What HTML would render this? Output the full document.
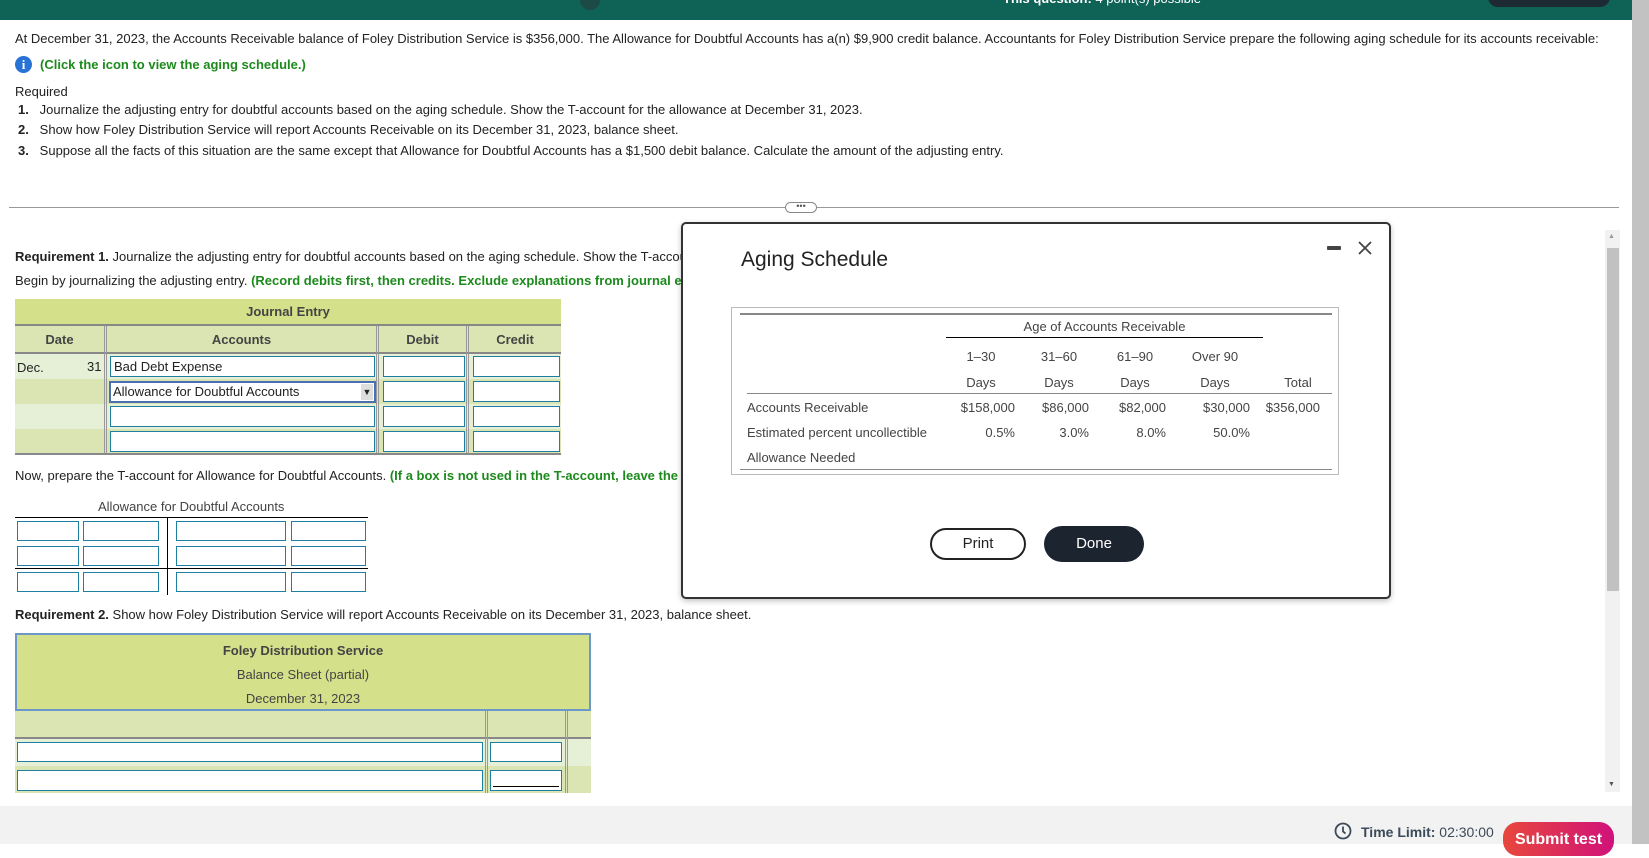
<!DOCTYPE html>
<html><head><meta charset="utf-8">
<style>
*{margin:0;padding:0;box-sizing:border-box}
body{width:1649px;height:844px;overflow:hidden;background:#fff;font-family:"Liberation Sans",Arial,sans-serif;color:#222;font-size:13px;position:relative}
.a{position:absolute;white-space:nowrap}
.g{color:#1d8a1d;font-weight:bold}
.in{position:absolute;background:#fff;border:1px solid #1e7fa0}
.hl{position:absolute;background:#888}
</style></head><body>
<!-- top bar -->
<div class="a" style="left:0;top:0;width:1632px;height:20px;background:#0f6256"></div>
<div class="a" style="left:1003px;top:-9px;color:#fff;font-size:13px"><b>This question:</b> 4 point(s) possible</div>
<div class="a" style="left:1488px;top:-14px;width:122px;height:21px;border-radius:10px;background:#1d2a33"></div>
<div class="a" style="left:580px;top:-10px;width:20px;height:20px;border-radius:50%;background:#1d4a44"></div>
<!-- right strip -->
<div class="a" style="left:1632px;top:0;width:17px;height:844px;background:#c2c2c2"></div>

<div class="a" style="left:15px;top:31px;font-size:13px">At December 31, 2023, the Accounts Receivable balance of Foley Distribution Service is $356,000. The Allowance for Doubtful Accounts has a(n) $9,900 credit balance. Accountants for Foley Distribution Service prepare the following aging schedule for its accounts receivable:</div>
<div class="a" style="left:15px;top:56px;width:17px;height:17px;border-radius:50%;background:#2a73d6;color:#fff;font:bold 13px 'Liberation Serif',serif;text-align:center;line-height:17px">i</div>
<div class="a g" style="left:40px;top:57px">(Click the icon to view the aging schedule.)</div>
<div class="a" style="left:15px;top:84px">Required</div>
<div class="a" style="left:18px;top:102px"><b>1.</b>&nbsp;&nbsp; Journalize the adjusting entry for doubtful accounts based on the aging schedule. Show the T-account for the allowance at December 31, 2023.</div>
<div class="a" style="left:18px;top:122px"><b>2.</b>&nbsp;&nbsp; Show how Foley Distribution Service will report Accounts Receivable on its December 31, 2023, balance sheet.</div>
<div class="a" style="left:18px;top:143px"><b>3.</b>&nbsp;&nbsp; Suppose all the facts of this situation are the same except that Allowance for Doubtful Accounts has a $1,500 debit balance. Calculate the amount of the adjusting entry.</div>

<div class="a" style="left:9px;top:207px;width:1610px;height:1px;background:#999"></div>
<div class="a" style="left:785px;top:202px;width:32px;height:11px;border:1px solid #888;border-radius:6px;background:#fff;font-size:9px;line-height:6px;text-align:center;color:#555">•••</div>

<div class="a" style="left:15px;top:249px"><b>Requirement 1.</b> Journalize the adjusting entry for doubtful accounts based on the aging schedule. Show the T-account for the allowance at December 31, 2023.</div>
<div class="a" style="left:15px;top:273px">Begin by journalizing the adjusting entry. <span class="g">(Record debits first, then credits. Exclude explanations from journal entries.)</span></div>

<!-- journal -->
<div class="a" style="left:15px;top:299px;width:546px;height:26px;background:#d5e08a;text-align:center;line-height:26px;font-weight:bold;color:#444">Journal Entry</div>
<div class="a" style="left:15px;top:324px;width:546px;height:2px;background:#888"></div>
<div class="a" style="left:15px;top:326px;width:546px;height:26px;background:#dae5b3"></div>
<div class="a" style="left:15px;top:352px;width:546px;height:2px;background:#888"></div>
<div class="a" style="left:15px;top:354px;width:546px;height:25px;background:#e6f0d6"></div>
<div class="a" style="left:15px;top:379px;width:546px;height:25px;background:#dae5b3"></div>
<div class="a" style="left:15px;top:404px;width:546px;height:25px;background:#e6f0d6"></div>
<div class="a" style="left:15px;top:429px;width:546px;height:24px;background:#dae5b3"></div>
<div class="a" style="left:15px;top:453px;width:546px;height:2px;background:#888"></div>
<div class="a" style="left:104px;top:326px;width:3px;height:127px;border-left:1px solid #999;border-right:1px solid #999"></div>
<div class="a" style="left:376px;top:326px;width:3px;height:127px;border-left:1px solid #999;border-right:1px solid #999"></div>
<div class="a" style="left:466px;top:326px;width:3px;height:127px;border-left:1px solid #999;border-right:1px solid #999"></div>
<div class="a" style="left:15px;top:332px;width:89px;text-align:center;font-weight:bold;color:#444">Date</div>
<div class="a" style="left:107px;top:332px;width:269px;text-align:center;font-weight:bold;color:#444">Accounts</div>
<div class="a" style="left:379px;top:332px;width:87px;text-align:center;font-weight:bold;color:#444">Debit</div>
<div class="a" style="left:469px;top:332px;width:92px;text-align:center;font-weight:bold;color:#444">Credit</div>
<div class="a" style="left:17px;top:360px">Dec.</div>
<div class="a" style="left:87px;top:359px">31</div>
<div class="in" style="left:110px;top:356px;width:265px;height:21px;padding-left:3px;line-height:19px">Bad Debt Expense</div>
<div class="in" style="left:109px;top:381px;width:267px;height:22px;border:2px solid #4a6fb5;padding-left:2px;line-height:18px">Allowance for Doubtful Accounts<span style="position:absolute;right:1px;top:1px;width:12px;height:16px;background:#ddd;font-size:9px;text-align:center;line-height:16px">▼</span></div>
<div class="in" style="left:110px;top:406px;width:265px;height:21px"></div>
<div class="in" style="left:110px;top:431px;width:265px;height:21px"></div>
<div class="in" style="left:383px;top:356px;width:82px;height:21px"></div>
<div class="in" style="left:383px;top:381px;width:82px;height:21px"></div>
<div class="in" style="left:383px;top:406px;width:82px;height:21px"></div>
<div class="in" style="left:383px;top:431px;width:82px;height:21px"></div>
<div class="in" style="left:473px;top:356px;width:87px;height:21px"></div>
<div class="in" style="left:473px;top:381px;width:87px;height:21px"></div>
<div class="in" style="left:473px;top:406px;width:87px;height:21px"></div>
<div class="in" style="left:473px;top:431px;width:87px;height:21px"></div>

<div class="a" style="left:15px;top:468px">Now, prepare the T-account for Allowance for Doubtful Accounts. <span class="g">(If a box is not used in the T-account, leave the box empty; do not select a label or enter a zero.)</span></div>
<div class="a" style="left:98px;top:499px;color:#444">Allowance for Doubtful Accounts</div>
<div class="a" style="left:15px;top:517px;width:353px;height:1px;background:#000"></div>
<div class="a" style="left:15px;top:568px;width:353px;height:1px;background:#000"></div>
<div class="a" style="left:167px;top:517px;width:1px;height:78px;background:#000"></div>
<div class="in" style="left:17px;top:521px;width:62px;height:20px"></div>
<div class="in" style="left:83px;top:521px;width:76px;height:20px"></div>
<div class="in" style="left:176px;top:521px;width:110px;height:20px"></div>
<div class="in" style="left:291px;top:521px;width:75px;height:20px"></div>
<div class="in" style="left:17px;top:546px;width:62px;height:20px"></div>
<div class="in" style="left:83px;top:546px;width:76px;height:20px"></div>
<div class="in" style="left:176px;top:546px;width:110px;height:20px"></div>
<div class="in" style="left:291px;top:546px;width:75px;height:20px"></div>
<div class="in" style="left:17px;top:572px;width:62px;height:20px"></div>
<div class="in" style="left:83px;top:572px;width:76px;height:20px"></div>
<div class="in" style="left:176px;top:572px;width:110px;height:20px"></div>
<div class="in" style="left:291px;top:572px;width:75px;height:20px"></div>

<div class="a" style="left:15px;top:607px"><b>Requirement 2.</b> Show how Foley Distribution Service will report Accounts Receivable on its December 31, 2023, balance sheet.</div>
<div class="a" style="left:15px;top:633px;width:576px;height:78px;background:#d5e08a;border:2px solid #6b97c9;text-align:center;color:#444">
<div style="margin-top:8px;font-weight:bold">Foley Distribution Service</div>
<div style="margin-top:9px">Balance Sheet (partial)</div>
<div style="margin-top:9px">December 31, 2023</div></div>
<div class="a" style="left:15px;top:711px;width:576px;height:26px;background:#dae5b3"></div>
<div class="a" style="left:15px;top:737px;width:576px;height:2px;background:#888"></div>
<div class="a" style="left:15px;top:739px;width:576px;height:27px;background:#e6f0d6"></div>
<div class="a" style="left:15px;top:766px;width:576px;height:27px;background:#dae5b3"></div>
<div class="a" style="left:485px;top:711px;width:3px;height:82px;border-left:1px solid #999;border-right:1px solid #999"></div>
<div class="a" style="left:565px;top:711px;width:3px;height:82px;border-left:1px solid #999;border-right:1px solid #999"></div>
<div class="in" style="left:17px;top:742px;width:466px;height:20px"></div>
<div class="in" style="left:490px;top:742px;width:72px;height:20px"></div>
<div class="in" style="left:17px;top:770px;width:466px;height:21px"></div>
<div class="in" style="left:490px;top:770px;width:72px;height:21px"><div style="position:absolute;left:2px;right:2px;bottom:3px;height:1px;background:#000"></div></div>

<!-- scrollbar -->
<div class="a" style="left:1605px;top:230px;width:15px;height:562px;background:#f1f1f1"></div>
<div class="a" style="left:1607px;top:248px;width:12px;height:343px;background:#c1c1c1"></div>
<div class="a" style="left:1608px;top:233px;font-size:7px;color:#999">▲</div>
<div class="a" style="left:1608px;top:781px;font-size:7px;color:#555">▼</div>

<!-- modal -->
<div class="a" style="left:681px;top:222px;width:710px;height:377px;border:2px solid #333;border-radius:5px;background:#fff;box-shadow:0 2px 6px rgba(0,0,0,.25)"></div>
<div class="a" style="left:741px;top:248px;font-size:21px;color:#222">Aging Schedule</div>
<div class="a" style="left:1327px;top:246px;width:14px;height:4px;background:#444;border-radius:1px"></div>
<svg class="a" style="left:1357px;top:240px" width="16" height="16"><path d="M2 2L14 14M14 2L2 14" stroke="#444" stroke-width="1.8"/></svg>
<div class="a" style="left:731px;top:307px;width:608px;height:168px;border:1px solid #bbb"></div>
<div class="a" style="left:740px;top:313px;width:592px;height:2px;background:#888"></div>
<div class="a" style="left:946px;top:337px;width:317px;height:1px;background:#000"></div>
<div class="a" style="left:747px;top:393px;width:585px;height:1px;background:#888"></div>
<div class="a" style="left:740px;top:469px;width:592px;height:1px;background:#888"></div>
<div class="a" style="left:946px;top:319px;width:317px;text-align:center;color:#444">Age of Accounts Receivable</div>
<div class="a" style="left:951px;top:349px;width:60px;text-align:center;color:#444">1–30</div>
<div class="a" style="left:1029px;top:349px;width:60px;text-align:center;color:#444">31–60</div>
<div class="a" style="left:1105px;top:349px;width:60px;text-align:center;color:#444">61–90</div>
<div class="a" style="left:1185px;top:349px;width:60px;text-align:center;color:#444">Over 90</div>
<div class="a" style="left:951px;top:375px;width:60px;text-align:center;color:#444">Days</div>
<div class="a" style="left:1029px;top:375px;width:60px;text-align:center;color:#444">Days</div>
<div class="a" style="left:1105px;top:375px;width:60px;text-align:center;color:#444">Days</div>
<div class="a" style="left:1185px;top:375px;width:60px;text-align:center;color:#444">Days</div>
<div class="a" style="left:1268px;top:375px;width:60px;text-align:center;color:#444">Total</div>
<div class="a" style="left:747px;top:400px;color:#444">Accounts Receivable</div>
<div class="a" style="left:747px;top:425px;color:#444">Estimated percent uncollectible</div>
<div class="a" style="left:747px;top:450px;color:#444">Allowance Needed</div>
<div class="a" style="left:915px;top:400px;width:100px;text-align:right;color:#444">$158,000</div>
<div class="a" style="left:989px;top:400px;width:100px;text-align:right;color:#444">$86,000</div>
<div class="a" style="left:1066px;top:400px;width:100px;text-align:right;color:#444">$82,000</div>
<div class="a" style="left:1150px;top:400px;width:100px;text-align:right;color:#444">$30,000</div>
<div class="a" style="left:1220px;top:400px;width:100px;text-align:right;color:#444">$356,000</div>
<div class="a" style="left:915px;top:425px;width:100px;text-align:right;color:#444">0.5%</div>
<div class="a" style="left:989px;top:425px;width:100px;text-align:right;color:#444">3.0%</div>
<div class="a" style="left:1066px;top:425px;width:100px;text-align:right;color:#444">8.0%</div>
<div class="a" style="left:1150px;top:425px;width:100px;text-align:right;color:#444">50.0%</div>
<div class="a" style="left:930px;top:528px;width:96px;height:32px;border:2px solid #222;border-radius:16px;text-align:center;line-height:28px;font-size:15px;color:#222">Print</div>
<div class="a" style="left:1044px;top:526px;width:100px;height:36px;background:#1c2430;border-radius:18px;text-align:center;line-height:36px;font-size:15px;color:#fff">Done</div>

<!-- footer -->
<div class="a" style="left:0;top:806px;width:1632px;height:38px;background:#f2f2f2"></div>
<svg class="a" style="left:1334px;top:822px" width="18" height="18"><circle cx="9" cy="9" r="7.5" fill="none" stroke="#3c4a5a" stroke-width="1.8"/><path d="M9 4.5V9.5L11.5 11.5" fill="none" stroke="#3c4a5a" stroke-width="1.8"/></svg>
<div class="a" style="left:1361px;top:824px;font-size:14px;color:#3c4a5a"><b>Time Limit:</b> 02:30:00</div>
<div class="a" style="left:1503px;top:822px;width:111px;height:34px;border-radius:15px;background:linear-gradient(90deg,#e8473c,#d0127a);color:#fff;font-weight:bold;font-size:16px;text-align:center;line-height:36px">Submit test</div>
</body></html>
